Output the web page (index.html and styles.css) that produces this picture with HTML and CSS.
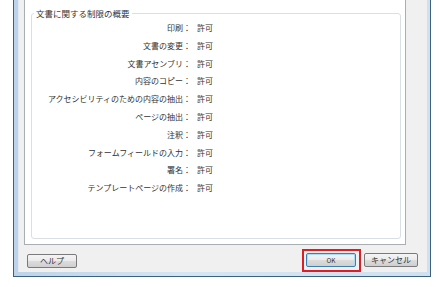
FILE: index.html
```html
<!DOCTYPE html>
<html>
<head>
  <meta charset="UTF-8">
  <link rel="stylesheet" href="styles.css">
</head>
<body>
  <div class="window">
    <div class="client">
      <div class="panel">
        <fieldset class="group">
          <legend>文書に関する制限の概要</legend>
          <div class="summary">
            <span class="label">印刷：</span><span class="value">許可</span>
            <span class="label">文書の変更：</span><span class="value">許可</span>
            <span class="label">文書アセンブリ：</span><span class="value">許可</span>
            <span class="label">内容のコピー：</span><span class="value">許可</span>
            <span class="label">アクセシビリティのための内容の抽出：</span><span class="value">許可</span>
            <span class="label">ページの抽出：</span><span class="value">許可</span>
            <span class="label">注釈：</span><span class="value">許可</span>
            <span class="label">フォームフィールドの入力：</span><span class="value">許可</span>
            <span class="label">署名：</span><span class="value">許可</span>
            <span class="label">テンプレートページの作成：</span><span class="value">許可</span>
          </div>
        </fieldset>
      </div>
      <div class="button-row">
        <button class="btn help-btn">ヘルプ</button>
        <div class="spacer"></div>
        <span class="highlight">
          <button class="btn ok-btn">OK</button>
        </span>
        <button class="btn cancel-btn">キャンセル</button>
      </div>
    </div>
  </div>
</body>
</html>
```
FILE: styles.css
```css
body {
  margin: 0;
  background-color: #ffffff;
  font-family: 'Noto Sans CJK JP', 'Noto Sans', sans-serif;
  color: #333333;
}
.window {
  margin-left: 13px;
  width: 409px;
  height: 272px;
  border: 1px solid #3d5f80;
  border-top: 0;
  background: linear-gradient(to right, #bcd3ea, #d6e5f3 40%, #cfe0f0);
  padding: 0 3px 4px 4px;
}
.client {
  height: 272px;
  background-color: #f0f0f0;
  border-left: 1px solid #e4e9ef;
  display: flex;
  flex-direction: column;
}

/* White property page */
.panel {
  margin-left: 5px;
  width: 382px;
  height: 246px;
  background-color: #ffffff;
  border: 1px solid #a9aeb3;
  border-top: 0;
  padding: 0 4px 5px 6px;
  box-sizing: border-box;
  display: flex;
}
.group {
  flex: 1;
  margin: 8px 0 0 0;
  padding: 1px 0 0 0;
  border: 1px solid #d8e0e6;
  border-radius: 3px;
  min-width: 0;
}
.group legend {
  font-size: 8.5px;
  line-height: 10px;
  padding: 0 2px;
  margin-left: 2px;
}
.summary {
  display: grid;
  grid-template-columns: 159px auto;
  column-gap: 6px;
  font-size: 8px;
  line-height: 17.8px;
}
.label {
  text-align: right;
}

/* Bottom buttons */
.button-row {
  display: flex;
  align-items: flex-start;
  padding: 0 9px 0 8px;
}
.spacer {
  flex: 1;
}
.btn {
  height: 14px;
  padding: 0;
  font-family: 'Noto Sans CJK JP', 'Noto Sans', sans-serif;
  font-size: 8px;
  line-height: 12px;
  color: #333333;
  border: 1px solid #7a7a7a;
  border-radius: 2px;
  background: linear-gradient(#f4f4f4 0%, #ebebeb 48%, #dcdcdc 52%, #cfcfcf 100%);
}
.help-btn {
  width: 50px;
  margin-top: 9px;
}
.highlight {
  display: flex;
  margin-top: 4px;
  padding: 2px 3px 3px 2px;
  border: 2px solid #dc1f26;
}
.ok-btn {
  width: 50px;
  font-size: 6.5px;
  border-color: #3c7fb1;
  box-shadow: inset 0 0 0 1px #a9dcf6;
}
.cancel-btn {
  width: 54px;
  margin-top: 8px;
  margin-left: 3px;
}
```
